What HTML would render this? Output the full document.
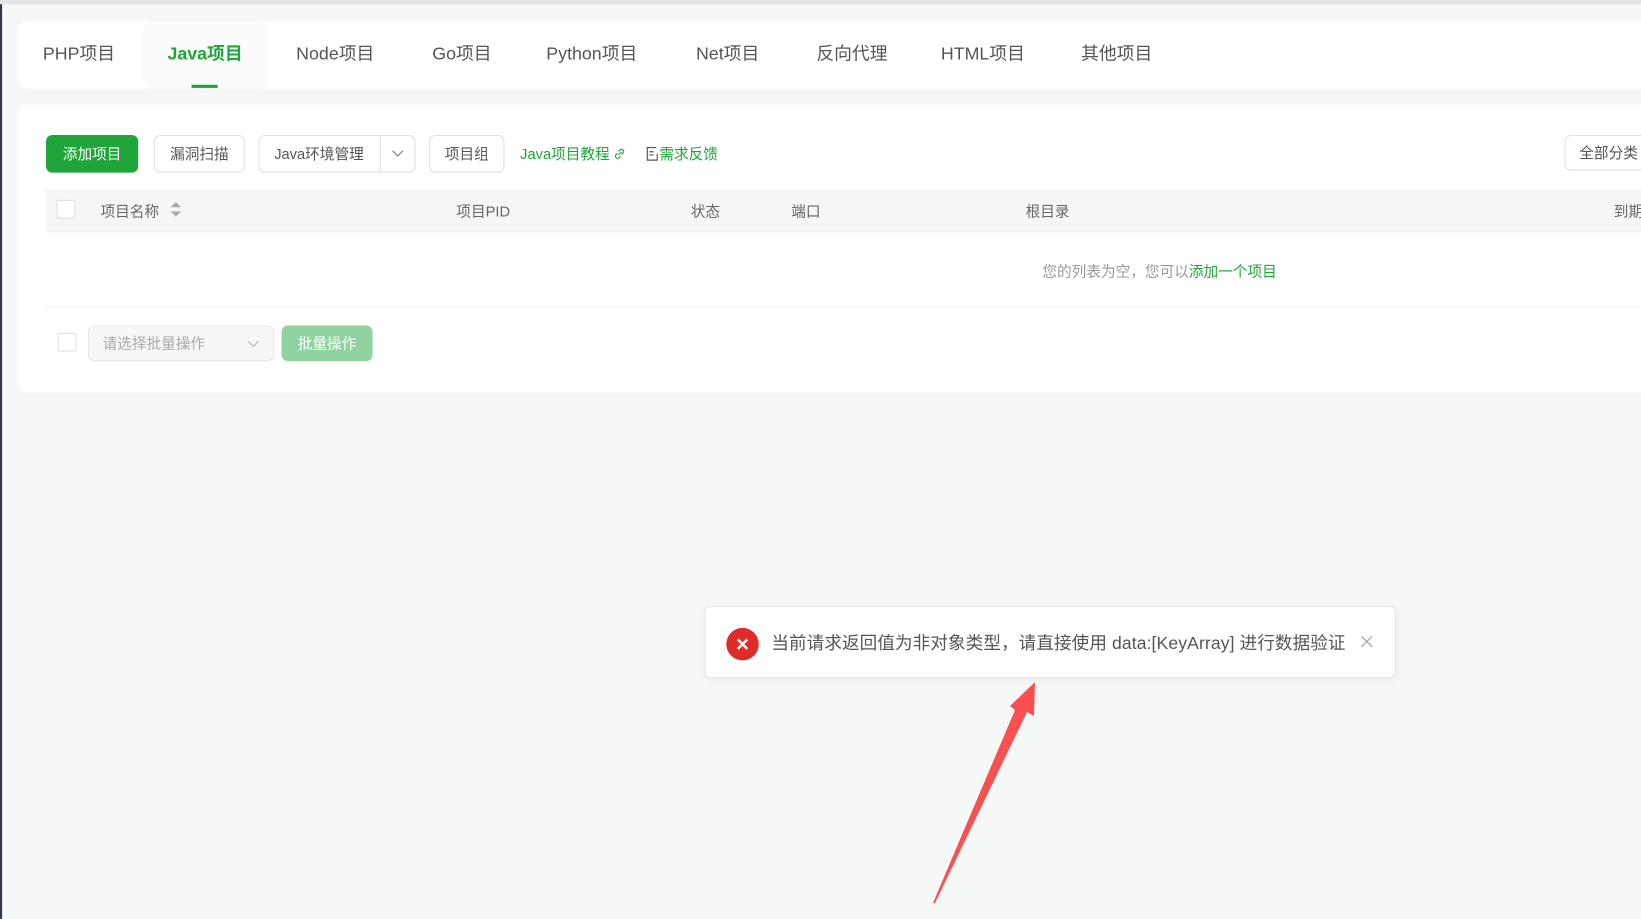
<!DOCTYPE html>
<html><head><meta charset="utf-8"><style>
*{box-sizing:border-box;margin:0;padding:0}
html,body{width:1641px;height:919px;overflow:hidden;background:#f6f7f7;font-family:"Liberation Sans","Noto Sans CJK SC",sans-serif}
#w{position:absolute;left:0;top:0;width:1568px;height:878px;transform:scale(1.04656);transform-origin:0 0;background:#f6f7f7}
.abs{position:absolute;white-space:nowrap}
.card{position:absolute;background:#fff;border-radius:10px}
.tab{position:absolute;top:20px;height:65px;line-height:64px;font-size:17px;color:#555;white-space:nowrap}
.btn{position:absolute;top:129px;height:36px;line-height:34px;border:1px solid #dcdfe6;border-radius:6px;font-size:14px;color:#555;text-align:center;background:#fff;white-space:nowrap}
.th{position:absolute;top:192px;font-size:14px;color:#666;white-space:nowrap}
.cb{position:absolute;width:18px;height:18px;border:1px solid #dcdfe6;border-radius:2px;background:#fff}
</style></head><body>
<div id="w">
<div class="abs" style="left:0;top:0;width:1568px;height:4px;background:#e3e4e5"></div>
<div class="abs" style="left:0;top:4px;width:2px;height:874px;background:#2d3a4b"></div>

<div class="card" style="left:16px;top:20px;width:1570px;height:65px"></div>
<div class="abs" style="left:136px;top:20px;width:120px;height:65px;background:#fbfbfb;border-radius:10px"></div>
<div class="tab" style="left:41px">PHP项目</div>
<div class="tab" style="left:160px;color:#20a53a;font-weight:bold">Java项目</div>
<div class="abs" style="left:183px;top:81px;width:25px;height:3px;background:#20a53a"></div>
<div class="tab" style="left:283px">Node项目</div>
<div class="tab" style="left:413px">Go项目</div>
<div class="tab" style="left:522px">Python项目</div>
<div class="tab" style="left:665px">Net项目</div>
<div class="tab" style="left:780px">反向代理</div>
<div class="tab" style="left:899px">HTML项目</div>
<div class="tab" style="left:1033px">其他项目</div>

<div class="card" style="left:16px;top:100px;width:1570px;height:275px"></div>
<div class="btn" style="left:44px;width:88px;background:#20a53a;border-color:#20a53a;color:#fff">添加项目</div>
<div class="btn" style="left:147px;width:87px">漏洞扫描</div>
<div class="btn" style="left:247px;width:150px;text-align:left;padding-left:14px">Java环境管理
 <span class="abs" style="left:115px;top:-1px;width:1px;height:36px;background:#dcdfe6"></span>
 <svg class="abs" style="left:126px;top:13px" width="12" height="8"><path d="M1 1l5 5 5-5" fill="none" stroke="#888" stroke-width="1.2"/></svg></div>
<div class="btn" style="left:410px;width:72px">项目组</div>
<div class="abs" style="left:497px;top:137px;font-size:14px;color:#20a53a">Java项目教程 <svg width="12" height="12" style="vertical-align:-1px"><path d="M5 7l3-3M4 5.5l-1.5 1.5a2 2 0 0 0 2.8 2.8L7 8.5M8 6.5l1.5-1.5a2 2 0 0 0-2.8-2.8L5 3.5" fill="none" stroke="#20a53a" stroke-width="1.1"/></svg></div>
<div class="abs" style="left:617px;top:137px;font-size:14px;color:#20a53a"><svg width="13" height="14" style="vertical-align:-2px"><path d="M10 1H1.5v12H11V7M3.5 5h4M3.5 8h4" fill="none" stroke="#555" stroke-width="1.1"/></svg>需求反馈</div>
<div class="btn" style="left:1495px;width:90px;height:34px;line-height:32px;text-align:left;padding-left:13px">全部分类</div>

<div class="abs" style="left:44px;top:181px;width:1524px;height:41px;background:#f6f6f6;border-bottom:1px solid #ebeef5"></div>
<div class="cb" style="left:54px;top:191px"></div>
<div class="th" style="left:96px">项目名称</div>
<svg class="abs" style="left:162px;top:192px" width="12" height="16"><path d="M6 1l5 5H1zM6 15l5-5H1z" fill="#aaa"/></svg>
<div class="th" style="left:436px">项目PID</div>
<div class="th" style="left:660px">状态</div>
<div class="th" style="left:756px">端口</div>
<div class="th" style="left:980px">根目录</div>
<div class="th" style="left:1542px">到期</div>
<div class="abs" style="left:996px;top:249px;font-size:14px;color:#999">您的列表为空，您可以<span style="color:#20a53a">添加一个项目</span></div>
<div class="abs" style="left:44px;top:293px;width:1524px;height:1px;background:#ebeef5"></div>

<div class="cb" style="left:55px;top:318px"></div>
<div class="abs" style="left:84px;top:311px;width:178px;height:34px;border:1px solid #e4e7ed;border-radius:6px;background:#f7f7f7;font-size:14px;color:#aaa;line-height:32px;padding-left:13px">请选择批量操作
 <svg class="abs" style="left:151px;top:13px" width="12" height="8"><path d="M1 1l5 5 5-5" fill="none" stroke="#bbb" stroke-width="1.2"/></svg></div>
<div class="abs" style="left:269px;top:311px;width:87px;height:34px;border-radius:6px;background:#90d3a0;color:#fff;font-size:14px;line-height:34px;text-align:center">批量操作</div>

<div class="abs" style="left:673px;top:579px;width:661px;height:69px;background:#fff;border:1px solid #e4e7ed;border-radius:6px;box-shadow:0 2px 8px rgba(0,0,0,.04)"></div>
<div class="abs" style="left:694px;top:600px;width:31px;height:31px;border-radius:50%;background:#e02b2b"></div>
<svg class="abs" style="left:703px;top:609px" width="13" height="13"><path d="M2 2l9 9M11 2l-9 9" stroke="#fff" stroke-width="2.4"/></svg>
<div class="abs" style="left:737px;top:601px;font-size:16.8px;letter-spacing:0.1px;color:#555">当前请求返回值为非对象类型，请直接使用 data:[KeyArray] 进行数据验证</div>
<svg class="abs" style="left:1300px;top:607px" width="12" height="12"><path d="M1 1l10 10M11 1L1 11" stroke="#aaa" stroke-width="1.3"/></svg>
</div>
<svg style="position:absolute;left:0;top:0" width="1641" height="919"><polygon points="933,903 1015,710 1010,706 1035,682 1034,716 1027,712 935,903" fill="#fa5050"/></svg>
</body></html>
